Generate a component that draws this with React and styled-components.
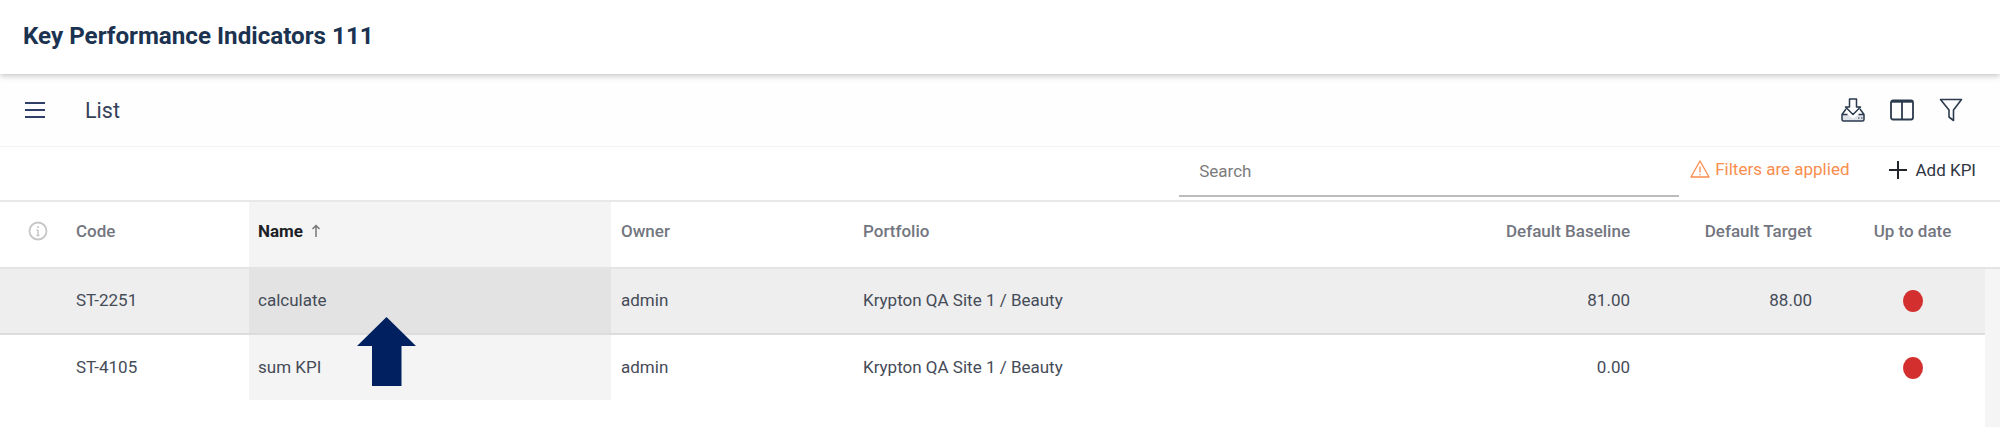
import styled, { createGlobalStyle } from 'styled-components';

const GlobalStyle = createGlobalStyle`
  html, body {
    margin: 0;
    padding: 0;
    background: #fff;
    font-family: Roboto, "Liberation Sans", sans-serif;
  }
`;

const COLUMNS = '67px 182px 362px 242px 1fr 190px 182px 163px';

const Page = styled.div`
  position: relative;
  width: 2000px;
  height: 427px;
  overflow: hidden;
  background: #fff;
`;

const TitleBar = styled.header`
  position: relative;
  height: 74px;
  padding-left: 23px;
  display: flex;
  align-items: center;
  background: #fff;
  box-shadow: 0 2px 6px rgba(0, 0, 0, 0.22);
`;

const Title = styled.h1`
  margin: 0 0 3px;
  font-size: 24.2px;
  font-weight: 700;
  color: #1b3350;
`;

const Toolbar = styled.div`
  height: 72px;
  padding: 0 37px 0 25px;
  display: flex;
  align-items: center;
  background: #fefefe;
  border-bottom: 1px solid #f3f3f3;
`;

const IconButton = styled.button`
  border: none;
  background: transparent;
  padding: 0;
  margin: 0;
  display: flex;
  cursor: pointer;
  color: #2b3a4d;
`;

const ToolbarTitle = styled.span`
  margin-left: 40px;
  font-size: 21.5px;
  color: #34405a;
  flex-grow: 1;
`;

const ToolIcons = styled.div`
  display: flex;
  align-items: center;
  gap: 25px;
`;

const ActionRow = styled.div`
  height: 53px;
  padding-right: 24px;
  display: flex;
  justify-content: flex-end;
  align-items: flex-start;
  background: #fff;
  border-bottom: 2px solid #e8e8e8;
`;

const Search = styled.input`
  width: 500px;
  height: 50px;
  box-sizing: border-box;
  padding: 0 20px;
  border: none;
  border-bottom: 2px solid #bcbcbc;
  outline: none;
  background: transparent;
  font-family: inherit;
  font-size: 17px;
  color: #333;
  &::placeholder {
    color: #7c7c7c;
  }
`;

const FilterNote = styled.div`
  margin: 12px 0 0 11px;
  display: flex;
  align-items: center;
  gap: 5px;
  font-size: 17px;
  color: #f98d4d;
`;

const AddButton = styled.button`
  margin: 13px 0 0 39px;
  padding: 0;
  border: none;
  background: transparent;
  display: flex;
  align-items: center;
  gap: 9px;
  font-family: inherit;
  font-size: 17px;
  color: #2f3542;
  cursor: pointer;
`;

const HeaderRow = styled.div`
  height: 67px;
  display: grid;
  grid-template-columns: ${COLUMNS};
  padding-right: 15px;
  border-bottom: 2px solid #e4e4e4;
  box-sizing: border-box;
`;

const Body = styled.div`
  height: 160px;
  padding-right: 15px;
  background: #f5f5f5;
`;

const Rows = styled.div`
  background: #fff;
  height: 100%;
`;

const Row = styled.div`
  height: ${props => (props.$active ? '66px' : '65px')};
  display: grid;
  grid-template-columns: ${COLUMNS};
  box-sizing: border-box;
  background: ${props => (props.$active ? '#eeeeee' : '#fff')};
  border-bottom: ${props => (props.$active ? '2px solid #dcdcdc' : 'none')};
`;

const Cell = styled.div`
  display: flex;
  align-items: center;
  justify-content: ${props => props.$align || 'flex-start'};
  padding: ${props => props.$pad || '0 10px 2px'};
  box-sizing: border-box;
  font-size: 17px;
  color: #454b57;
  background: ${props => props.$tint || 'transparent'};
`;

const HeadCell = styled(Cell)`
  padding-bottom: 8px;
  font-size: 17px;
  color: ${props => (props.$sorted ? '#1c1f26' : '#737680')};
  font-weight: ${props => (props.$sorted ? 700 : 500)};
`;

const SortArrow = styled.svg`
  margin-left: 8px;
`;

const Dot = styled.span`
  display: block;
  width: 20px;
  height: 22px;
  border-radius: 50%;
  background: #d32f2f;
`;

const Pointer = styled.svg`
  position: absolute;
  left: 357px;
  top: 317px;
`;

const DownloadIcon = () => (
  <svg width="24" height="24" viewBox="0 0 24 24" fill="none" stroke="currentColor" strokeWidth="1.500" strokeLinejoin="round">
    <path d="M1 16.500h5.500l5.500 4 5.500-4H23v5a1.500 1.500 0 0 1-1.500 1.500h-19A1.500 1.500 0 0 1 1 21.500z" fill="#dfe3e8" stroke="none" />
    <path d="M8.500 1h7v8h4L12 16.500 4.500 9h4z" />
    <path d="M5 11 1 16.500v5A1.500 1.500 0 0 0 2.500 23h19a1.500 1.500 0 0 0 1.500-1.500v-5L19 11" />
    <path d="M1 16.500h5.500M17.500 16.500H23" />
    <path d="M17 20h1.500M20 20h1.500" strokeWidth="1.200" />
  </svg>
);

const ColumnsIcon = () => (
  <svg width="24" height="22" viewBox="0 0 24 22" fill="none" stroke="currentColor" strokeWidth="1.800">
    <rect x="1" y="1.500" width="22" height="19" rx="2" />
    <path d="M1 2.500h22" strokeWidth="2.400" />
    <path d="M12 2v18" />
  </svg>
);

const FunnelIcon = () => (
  <svg width="24" height="24" viewBox="0 0 24 24" fill="none" stroke="currentColor" strokeWidth="1.600" strokeLinejoin="round">
    <path d="M1.500 1.500h21L14.500 12v10.500L10 19v-7z" />
  </svg>
);

const MenuIcon = () => (
  <svg width="20" height="18" viewBox="0 0 20 18" fill="none" stroke="#2f4068" strokeWidth="2.200">
    <path d="M0 2h20M0 9h20M0 16h20" />
  </svg>
);

const InfoIcon = () => (
  <svg width="20" height="20" viewBox="0 0 20 20" fill="none" stroke="#c6c6c6">
    <circle cx="10" cy="10" r="8.500" strokeWidth="1.800" />
    <path d="M10 9v5M8.500 14.500h3M8.700 9h1.300" strokeWidth="1.500" />
    <path d="M10 5.200v1.800" strokeWidth="1.800" />
  </svg>
);

const WarningIcon = () => (
  <svg width="20" height="18" viewBox="0 0 20 18" fill="none" stroke="#f98d4d" strokeWidth="1.300" strokeLinejoin="round">
    <path d="M10 1 19 17H1z" />
    <path d="M10 6.500v6M10 14v1.300" />
  </svg>
);

const PlusIcon = () => (
  <svg width="18" height="18" viewBox="0 0 18 18" fill="none" stroke="#22252c" strokeWidth="2">
    <path d="M9 0v18M0 9h18" />
  </svg>
);

const rows = [
  { code: 'ST-2251', name: 'calculate', owner: 'admin', portfolio: 'Krypton QA Site 1 / Beauty', baseline: '81.00', target: '88.00', active: true },
  { code: 'ST-4105', name: 'sum KPI', owner: 'admin', portfolio: 'Krypton QA Site 1 / Beauty', baseline: '0.00', target: '' },
];

export default function App() {
  return (
    <Page>
      <GlobalStyle />
      <TitleBar>
        <Title>Key Performance Indicators 111</Title>
      </TitleBar>
      <Toolbar>
        <IconButton><MenuIcon /></IconButton>
        <ToolbarTitle>List</ToolbarTitle>
        <ToolIcons>
          <IconButton><DownloadIcon /></IconButton>
          <IconButton><ColumnsIcon /></IconButton>
          <IconButton><FunnelIcon /></IconButton>
        </ToolIcons>
      </Toolbar>
      <ActionRow>
        <Search placeholder="Search" />
        <FilterNote><WarningIcon />Filters are applied</FilterNote>
        <AddButton><PlusIcon />Add KPI</AddButton>
      </ActionRow>
      <HeaderRow>
        <HeadCell $align="flex-end" $pad="0 19px 0 0"><InfoIcon /></HeadCell>
        <HeadCell $pad="0 10px 0 9px">Code</HeadCell>
        <HeadCell $sorted $tint="#f4f4f4" $pad="0 10px 0 9px">
          Name
          <SortArrow width="10" height="13" viewBox="0 0 10 13" fill="none" stroke="#777" strokeWidth="1.500">
            <path d="M5 13V1.500M1.500 5 5 1.500 8.500 5" />
          </SortArrow>
        </HeadCell>
        <HeadCell>Owner</HeadCell>
        <HeadCell>Portfolio</HeadCell>
        <HeadCell $align="flex-end">Default Baseline</HeadCell>
        <HeadCell $align="flex-end">Default Target</HeadCell>
        <HeadCell $align="center" $pad="0 0 0 18px">Up to date</HeadCell>
      </HeaderRow>
      <Body>
        <Rows>
          {rows.map(row => (
            <Row key={row.code} $active={row.active}>
              <Cell />
              <Cell $pad="0 10px 2px 9px">{row.code}</Cell>
              <Cell $pad="0 10px 2px 9px" $tint={row.active ? '#e3e3e3' : '#f4f4f4'}>{row.name}</Cell>
              <Cell>{row.owner}</Cell>
              <Cell>{row.portfolio}</Cell>
              <Cell $align="flex-end">{row.baseline}</Cell>
              <Cell $align="flex-end">{row.target}</Cell>
              <Cell $align="center" $pad="0 0 0 18px"><Dot /></Cell>
            </Row>
          ))}
        </Rows>
      </Body>
      <Pointer width="59" height="69" viewBox="0 0 59 69">
        <path d="M29.500 0 59 29H44.500V69H15V29H0z" fill="#00205f" />
      </Pointer>
    </Page>
  );
}
